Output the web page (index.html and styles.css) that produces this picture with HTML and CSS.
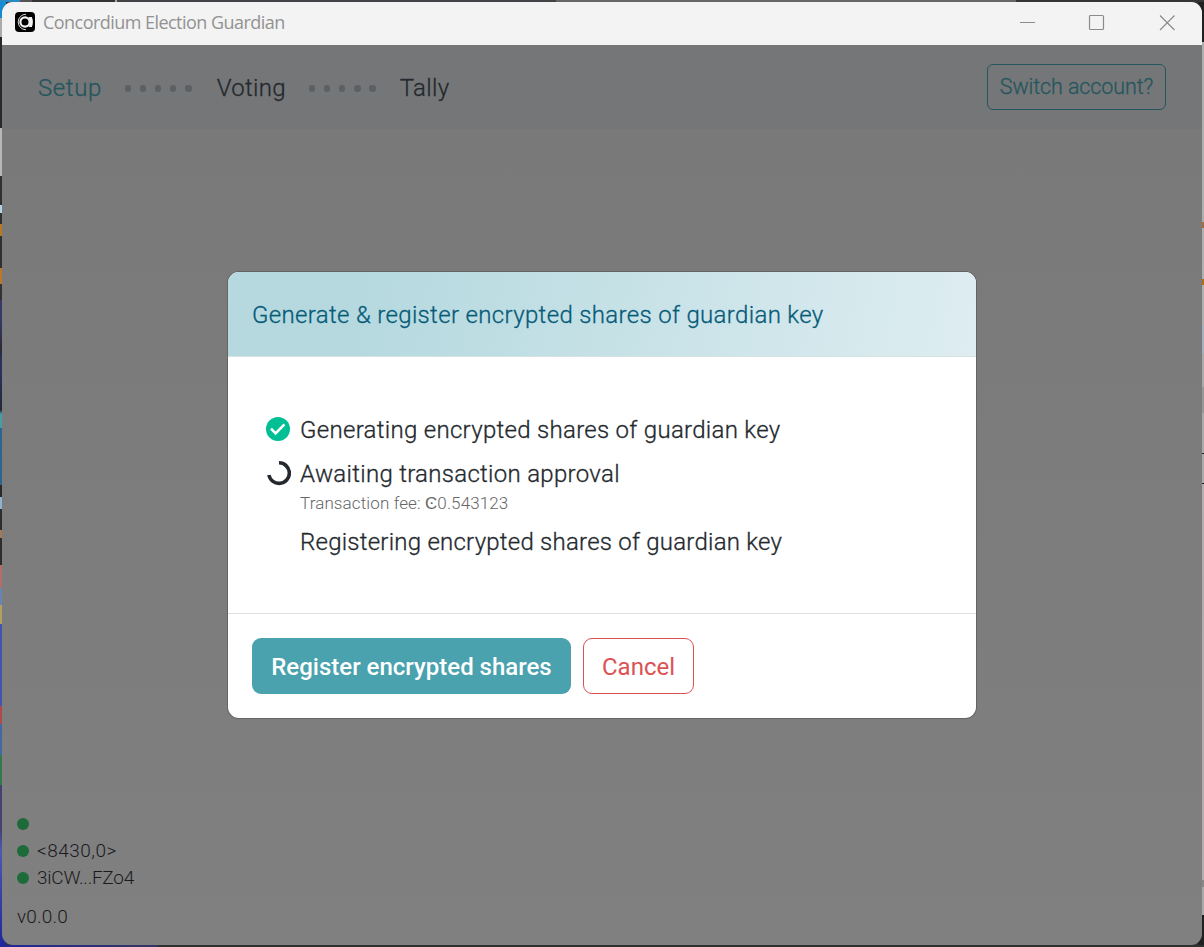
FILE: index.html
```html
<!DOCTYPE html>
<html lang="en">
<head>
<meta charset="utf-8">
<title>Concordium Election Guardian</title>
<link rel="stylesheet" href="styles.css">
</head>
<body>
<div class="desktop">
  <div class="window">
    <header class="titlebar">
      <svg class="app-icon" width="20" height="20" viewBox="0 0 20 20"><rect width="20" height="20" rx="4" fill="#000"/><path d="M11 2.200A7.800 7.800 0 1 0 11 17.800" fill="none" stroke="#d8d8d8" stroke-width="1"/><circle cx="10" cy="10" r="4.600" fill="none" stroke="#f3f3f3" stroke-width="2.200"/><path d="M13.500 5h3.300q2.200 5 0 10h-3.300q2.600-5 0-10Z" fill="#f3f3f3"/></svg>
      <span class="app-name">Concordium Election Guardian</span>
      <svg class="controls" width="158" height="18" viewBox="0 0 158 18" fill="none" stroke="#8b8b8b" stroke-width="1.200"><path d="M1 9.500h15"/><rect x="70.500" y="2.500" width="14" height="14" rx="1"/><path d="m141 2.500 14.500 14.500M155.500 2.500 141 17"/></svg>
    </header>
    <nav class="nav">
      <span class="step step-active">Setup</span>
      <span class="dots"><i></i><i></i><i></i><i></i><i></i></span>
      <span class="step step-voting">Voting</span>
      <span class="dots"><i></i><i></i><i></i><i></i><i></i></span>
      <span class="step step-tally">Tally</span>
      <button class="switch"><span>Switch account?</span></button>
    </nav>
    <main class="content">
      <section class="modal">
        <h1 class="modal-header"><span>Generate &amp; register encrypted shares of guardian key</span></h1>
        <div class="modal-body">
          <div class="row">
            <svg class="status" width="26" height="26" viewBox="0 0 26 26"><circle cx="13" cy="13" r="12" fill="#00bf94"/><path d="m6 12.700 4.600 4.600 8.800-9" fill="none" stroke="#fff" stroke-width="2.600"/></svg>
            <span class="t-generate">Generating encrypted shares of guardian key</span>
          </div>
          <div class="row">
            <svg class="status" width="26" height="26" viewBox="0 0 26 26"><path d="M14 2.800A10.300 10.300 0 1 1 3.900 15" fill="none" stroke="#24292e" stroke-width="3.600"/></svg>
            <span class="t-await">Awaiting transaction approval</span>
          </div>
          <div class="fee"><span>Transaction fee: Ͼ0.543123</span></div>
          <div class="row row-last"><span class="t-register">Registering encrypted shares of guardian key</span></div>
        </div>
        <footer class="modal-footer">
          <button class="btn btn-primary"><span>Register encrypted shares</span></button>
          <button class="btn btn-cancel"><span>Cancel</span></button>
        </footer>
      </section>
      <aside class="info">
        <div class="info-row"><b></b></div>
        <div class="info-row"><b></b><span class="t-index">&lt;8430,0&gt;</span></div>
        <div class="info-row"><b></b><span class="t-account">3iCW...FZo4</span></div>
        <div class="version"><span>v0.0.0</span></div>
      </aside>
    </main>
  </div>
</div>
</body>
</html>
```
FILE: styles.css
```css
* { box-sizing: border-box; }
body { margin: 0; font-family: Roboto, "Liberation Sans", sans-serif; font-weight: 300; color: #24292e; }
button { font-family: inherit; font-weight: inherit; margin: 0; }
.desktop {
  width: 1204px; height: 947px; padding: 2px;
  background:
    linear-gradient(90deg, #298ac5 0 20px, #555 20px 32px, #353435 32px 115px, #aaa 115px 117px, #444246 117px 556px, #666 556px 1016px, #353535 1016px) 0 0 / 100% 2px no-repeat,
    linear-gradient(90deg, #20269c 0, #34375d 157px, #303030 159px) 0 945px / 100% 2px no-repeat,
    linear-gradient(#168bd0 0 18px, #aaa 18px 37px, #292929 37px 128px, #b8b8b8 128px 176px, #303030 176px 205px, #b4d3e4 205px 213px, #303030 213px 224px, #b77922 224px 236px, #303030 236px 268px, #bd772b 268px 284px, #333 284px 300px, #373966 300px 320px, #2b2b38 350px, #293465 365px, #252838 410px, #479da8 414px 428px, #2e658f 428px 485px, #292929 485px 497px, #8eb3d2 497px 509px, #2c2c2c 509px 530px, #a77857 530px 538px, #2c2c2c 538px 565px, #b46d6b 565px 588px, #6685b5 588px 605px, #b1a164 605px 624px, #4454ad 624px 706px, #b04a48 706px 724px, #4269a6 724px 755px, #34784c 755px 785px, #434270 785px 830px, #4e59b0 850px, #20269c 947px) 0 0 / 6px 100% no-repeat,
    linear-gradient(#202020 0 42px, #aeb0b0 42px 222px, #a76d3d 222px 228px, #b0b0b0 228px 279px, #b36b16 279px 285px, #aeb0b0 285px 326px, #a1b2bd 326px 353px, #aaa 353px 387px, #989898 387px 413px, #aaa 413px 453px, #222 453px 454px, #aaa 454px 483px, #222 483px 484px, #b2aeb0 484px 880px, #888 880px 887px, #aaa 887px 915px, #202020 915px) 1198px 0 / 6px 100% no-repeat #303030;
}
.window { width: 1200px; height: 943px; border-radius: 11px; overflow: hidden; background: linear-gradient(#787878, #808080); display: flex; flex-direction: column; }
.titlebar { height: 43px; flex: none; background: #f3f3f3; display: flex; align-items: center; padding: 0 25px 3px 13px; }
.app-name { margin-left: 8px; font: 18px "Open Sans", "Noto Sans", sans-serif; color: #929292; letter-spacing: -.54px; white-space: nowrap; }
.controls { margin-left: auto; }
.nav { height: 84px; flex: none; display: flex; align-items: center; padding: 2px 36px 0; background: #757678; font-size: 24px; }
.step, .switch, .modal-header, .row span { -webkit-text-stroke: .3px currentColor; }
.step { white-space: nowrap; line-height: 32px; letter-spacing: .3px; }
.step-active { color: #25565e; width: 63px; letter-spacing: .6px; }
.step-voting { width: 69px; }
.step-tally { width: 50px; }
.dots { display: flex; gap: 8.800px; margin: 1px 24px 0 24px; }
.dots i { width: 6.400px; height: 6.400px; border-radius: 50%; background: #5b6065; }
.step-active + .dots { margin-left: 23.500px; margin-right: 25px; }
.step-voting + .dots { margin-left: 23px; }
.switch { margin: 0 0 2px auto; width: 179px; height: 46px; border: 1px solid #25565e; border-radius: 6px; background: none; color: #25565e; font-size: 21.500px; letter-spacing: -.1px; padding: 0 0 2px; white-space: nowrap; }
.content { flex: 1; display: flex; flex-direction: column; padding: 143px 15px 0; }
.modal { width: 748px; height: 446px; margin: 0 auto; background: #fff; border-radius: 11px; overflow: hidden; box-shadow: 0 0 0 1px #646464; display: flex; flex-direction: column; flex: none; }
.modal-header { height: 85px; margin: 0; padding: 2px 24px 0; display: flex; align-items: center; font-weight: 300; font-size: 24px; letter-spacing: .34px; color: #065b79; background: linear-gradient(100deg, #b5d9df 18%, #deedf1); border-bottom: 1px solid #d7e2e5; white-space: nowrap; }
.modal-body { height: 256px; padding: 54px 37px 0; font-size: 24px; }
.row { height: 36px; margin-bottom: 8px; display: flex; align-items: center; gap: 9px; white-space: nowrap; }
.row span { padding-top: 2px; letter-spacing: .3px; }
.row .t-register { letter-spacing: .24px; }
.status { flex: none; }
.fee { margin: -8px 0 7px 35px; height: 25px; line-height: 25px; font-size: 17px; letter-spacing: .12px; color: #666; }
.row-last { padding-left: 35px; }
.modal-footer { flex: 1; border-top: 1px solid #dedfe0; padding: 24px; display: flex; gap: 12px; }
.btn { height: 56px; border-radius: 9px; font-size: 24px; padding: 2px 0 0; white-space: nowrap; }
.btn-primary { width: 319px; border: 0; background: #49a2ae; color: #fff; font-weight: 500; }
.btn-cancel { width: 111px; border: 1px solid #dc5254; background: #fff; color: #dc5254; font-weight: 400; }
.info { margin-top: 92px; color: #191b1e; font-size: 19px; }
.info-row { height: 27px; display: flex; align-items: center; gap: 8px; }
.info-row b { width: 12px; height: 12px; border-radius: 50%; background: #1c6b39; }
.t-index { letter-spacing: .5px; }
.t-account { letter-spacing: -.25px; }
.version { margin-top: 12px; line-height: 27px; letter-spacing: .2px; }
```
